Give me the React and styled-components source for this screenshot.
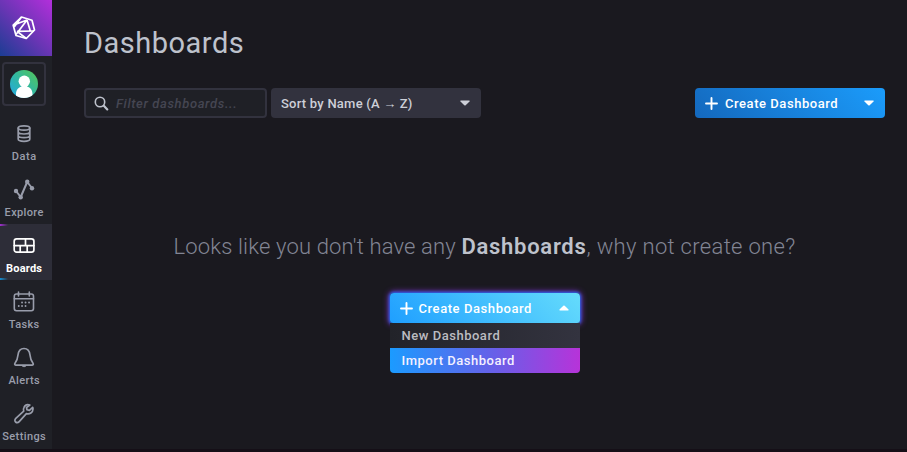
import React from "react";
import styled, { createGlobalStyle, css } from "styled-components";

const GlobalStyle = createGlobalStyle`
  * { box-sizing: border-box; }
  html, body { margin: 0; padding: 0; background: #1a191f; overflow: hidden; }
  body { font-family: Roboto, "Liberation Sans", sans-serif; }
  svg { display: block; flex: none; }
`;

const Page = styled.div`
  display: flex;
  width: 907px;
  height: 452px;
  background: #1a191f;
  border-bottom: 3px solid #150f17;
`;

const Sidebar = styled.nav`
  width: 52px;
  flex: none;
  display: flex;
  flex-direction: column;
  background: #1f2026;
  overflow: hidden;
`;

const Logo = styled.div`
  height: 56px;
  flex: none;
  padding: 16px 0 0 12px;
  background: linear-gradient(45deg, #1b3d93 0%, #6b35b5 50%, #b32fdb 100%);
`;

const UserSlot = styled.div`
  height: 56px;
  flex: none;
  padding: 6px 0 0 2px;
`;

const UserFrame = styled.div`
  width: 44px;
  height: 44px;
  display: flex;
  align-items: center;
  justify-content: center;
  border: 2px solid #32323e;
  border-radius: 4px;
`;

const NavItem = styled.a`
  height: 56px;
  flex: none;
  display: flex;
  flex-direction: column;
  width: 52px;
  padding: 10px 4px 0 0;
  align-items: center;
  color: ${(p) => (p.$active ? "#ffffff" : "#999dab")};
  ${(p) =>
    p.$active &&
    css`
      background:
        linear-gradient(90deg, #a02fd0, transparent) 0 0 / 8px 2px no-repeat,
        linear-gradient(90deg, #168fd5, transparent) 0 100% / 8px 2px no-repeat,
        #2d2d38;
    `}
`;

const NavLabel = styled.span`
  margin-top: 3px;
  font-size: 11px;
  line-height: 16px;
  font-weight: ${(p) => (p.$active ? 700 : 500)};
  letter-spacing: ${(p) => p.$track}px;
  margin-right: -${(p) => p.$track}px;
  white-space: nowrap;
`;

const Main = styled.main`
  flex: 1;
  display: flex;
  flex-direction: column;
  padding: 24px 22px 0 32px;
`;

const Title = styled.h1`
  margin: 0;
  height: 38px;
  font-size: 29px;
  line-height: 38px;
  font-weight: 400;
  letter-spacing: 0.5px;
  color: #bec2cc;
`;

const Toolbar = styled.div`
  display: flex;
  gap: 4px;
  margin-top: 26px;
`;

const SearchBox = styled.div`
  width: 183px;
  height: 30px;
  display: flex;
  align-items: center;
  gap: 7px;
  padding-left: 8px;
  border: 2px solid #32323e;
  border-radius: 4px;
  background: #1f2026;
`;

const Placeholder = styled.span`
  font-size: 13px;
  font-style: italic;
  font-weight: 500;
  letter-spacing: 0.62px;
  color: #454652;
`;

const SortButton = styled.button`
  width: 210px;
  height: 30px;
  display: flex;
  align-items: center;
  justify-content: space-between;
  border: 0;
  border-radius: 4px;
  padding: 0 11px 0 10px;
  background: #32323e;
  color: #cdcfd8;
  font: 500 13px/30px Roboto, sans-serif;
  letter-spacing: 0.23px;
`;

const SortLabel = styled.span`
  height: 30px;
  line-height: 32px;
`;

const Arrow = styled.span`
  font: 400 13px/1 "Liberation Sans", sans-serif;
  letter-spacing: 0;
`;

const CreateButton = styled.button`
  width: 190px;
  height: 30px;
  display: flex;
  align-items: center;
  border: 0;
  border-radius: ${(p) => (p.$open ? "4px 4px 3px 3px" : "4px")};
  padding: 0 11px 0 10px;
  margin-left: ${(p) => (p.$open ? "0" : "auto")};
  color: #fff;
  font: 500 13px/30px Roboto, sans-serif;
  letter-spacing: ${(p) => (p.$open ? 0.57 : 0.55)}px;
  background: ${(p) =>
    p.$open
      ? "linear-gradient(45deg, #1f9fff 0%, #65dcfc 100%)"
      : "linear-gradient(45deg, #1468bd 0%, #1b9cfb 100%)"};
  box-shadow: ${(p) => (p.$open ? "0 0 3px 1px #2465ef, 0 0 6px 1px #8b36d6" : "none")};
`;

const CreateLabel = styled.span`
  flex: 1;
  text-align: left;
  margin-left: ${(p) => (p.$open ? 6 : 7)}px;
  height: 30px;
  line-height: 32px;
`;

const EmptyState = styled.section`
  display: flex;
  flex-direction: column;
  align-items: center;
  margin-top: 113px;
`;

const Message = styled.p`
  margin: 0;
  height: 32px;
  width: 622px;
  font-size: 22px;
  line-height: 32px;
  font-weight: 300;
  letter-spacing: 0.16px;
  white-space: nowrap;
  color: #828594;

  b {
    font-weight: 600;
    letter-spacing: 0.72px;
    color: #bec2cc;
  }
`;

const MessageTail = styled.span`
  letter-spacing: 0.32px;
`;

const Dropdown = styled.div`
  width: 190px;
  margin-top: 30px;
`;

const Menu = styled.div`
  border-radius: 0 0 4px 4px;
  overflow: hidden;
  background: linear-gradient(90deg, #222329, #33333f);
`;

const MenuItem = styled.div`
  height: 25px;
  padding-left: 12px;
  font-size: 13px;
  line-height: 25px;
  font-weight: 500;
  letter-spacing: 0.52px;
  color: ${(p) => (p.$hover ? "#f4f0ff" : "#bcbcc1")};
  background: ${(p) =>
    p.$hover ? "linear-gradient(90deg, #1b9bff 0%, #685fe8 55%, #b733d9 100%)" : "transparent"};
`;

const Stroke = ({ children, width = 2 }) => (
  <svg width="24" height="24" viewBox="0 0 24 24" fill="none" stroke="currentColor"
    strokeWidth={width} strokeLinecap="round" strokeLinejoin="round">
    {children}
  </svg>
);

const DataIcon = () => (
  <Stroke width={1.7}>
    <ellipse cx="12" cy="6" rx="5.8" ry="2.2" />
    <path d="M6.2 6v11c0 1.300 2.600 2.300 5.800 2.300s5.800-1 5.800-2.300V6M6.200 9.800c0 1.300 2.600 2.200 5.800 2.200s5.800-.9 5.800-2.200M6.200 13.500c0 1.300 2.600 2.200 5.800 2.200s5.800-.9 5.800-2.200" />
  </Stroke>
);

const ExploreIcon = () => (
  <Stroke width={2}>
    <path d="M4 13l4.700 6L15.200 4 20 10" />
    <g fill="currentColor" stroke="none">
      <circle cx="4" cy="13" r="2.200" />
      <circle cx="8.700" cy="19.300" r="2.200" />
      <circle cx="15.200" cy="3.800" r="2.200" />
      <circle cx="20" cy="10.200" r="2.200" />
    </g>
  </Stroke>
);

const BoardsIcon = () => (
  <Stroke width={1.7}>
    <rect x="2.200" y="4.800" width="19.700" height="13.400" rx="2.400" />
    <path d="M2.200 11.600h19.700M13.500 4.800v6.800M8.200 11.600v6.600M15.200 11.600v6.600" />
  </Stroke>
);

const TasksIcon = () => (
  <Stroke width={1.6}>
    <rect x="2.300" y="4" width="19.200" height="16.700" rx="2.200" />
    <path d="M2.300 8.800h19.200M6.500 2v4M17.300 2v4" />
    <path d="M10 12.500h.1M13.500 12.500h.1M17 12.500h.1M6.700 16h.1M10 16h.1M13.500 16h.1" strokeWidth="1.800" />
  </Stroke>
);

const AlertsIcon = () => (
  <Stroke width={1.7}>
    <path d="M12 2.500c-4 0-5.600 2.900-6 6.500-.4 4.200-1.200 6-3 8.200-.8 1 0 1.900 1 1.900h16c1 0 1.800-.9 1-1.900-1.800-2.200-2.600-4-3-8.200-.4-3.600-2-6.500-6-6.500z" />
    <path d="M9.800 19.500h4.400c-.3 1.700-4.100 1.700-4.400 0z" fill="currentColor" strokeWidth="0.8" />
  </Stroke>
);

const SettingsIcon = () => (
  <Stroke width={1.7}>
    <path d="M17.800 3.100c-2.300-.8-4.800.2-5.800 2.200-.7 1.300-.7 2.600-.3 3.900L3.800 16.300c-1.200 1.200-1.200 2.800-.2 3.700 1 .9 2.500.8 3.600-.4l7.200-8c3.300 1 6.500-1.100 6.600-4.700 0-.5-.1-1-.3-1.500l-3.300 3-2.400-.6-.5-2.300z" />
  </Stroke>
);

const LogoMark = () => (
  <svg width="24" height="24" viewBox="0 0 24 24" fill="none" stroke="#fff" strokeWidth="1.700" strokeLinejoin="round">
    <path d="M9.500 1L20 4.300l2.500 9.700-8.200 8.500L4 19.500 1.200 9.200z" />
    <path d="M1.200 9.200L15 4M9.500 1L2.200 11M15 4L4 18.500M15 4l3.500 11.500M5 15.300l17-.3M5 15.300l9.300 7.200" />
  </svg>
);

const Avatar = () => (
  <svg width="28" height="28" viewBox="0 0 28 28">
    <defs>
      <linearGradient id="avatarFill" x1="0" y1="1" x2="1" y2="0">
        <stop offset="0" stopColor="#22a7e5" />
        <stop offset="0.500" stopColor="#32b8a1" />
        <stop offset="1" stopColor="#57c653" />
      </linearGradient>
      <clipPath id="avatarClip"><circle cx="14" cy="14" r="14" /></clipPath>
    </defs>
    <circle cx="14" cy="14" r="14" fill="url(#avatarFill)" />
    <g fill="#fff" clipPath="url(#avatarClip)">
      <circle cx="14.300" cy="11.300" r="5.700" />
      <path d="M11.500 15h5.600v1.500c3.200.8 5.300 3.500 5.400 7.500V28H6v-4c.1-4 2.300-6.700 5.500-7.500z" />
    </g>
  </svg>
);

const Caret = ({ up }) => (
  <svg width="10" height="6" viewBox="0 0 10 6">
    <path d={up ? "M.8 5.500h8.400q.8-.3.3-.9L5.700.7Q5 .1 4.300.7L.5 4.600q-.5.6.3.900z" : "M.8.5h8.400q.8.3.3.900L5.700 5.300Q5 5.900 4.300 5.300L.5 1.400Q0 .8.8.5z"} fill="currentColor" />
  </svg>
);

const Plus = () => (
  <svg width="13" height="13" viewBox="0 0 13 13" fill="none" stroke="currentColor" strokeWidth="1.900" strokeLinecap="round">
    <path d="M6.500 1v11M1 6.500h11" />
  </svg>
);

const SearchIcon = () => (
  <svg width="15" height="15" viewBox="0 0 15 15" fill="none" stroke="#bec2cc" strokeLinecap="round">
    <circle cx="6" cy="6" r="4.700" strokeWidth="1.600" />
    <path d="M9.800 9.800l3.500 3.600" strokeWidth="2.200" />
  </svg>
);

const NAV = [
  { label: "Data", Icon: DataIcon, track: 0.6 },
  { label: "Explore", Icon: ExploreIcon, track: 0.35 },
  { label: "Boards", Icon: BoardsIcon, active: true, track: 0.2 },
  { label: "Tasks", Icon: TasksIcon, track: 0.35 },
  { label: "Alerts", Icon: AlertsIcon, track: 0.35 },
  { label: "Settings", Icon: SettingsIcon, track: 0.4 },
];

const CreateDashboard = ({ open }) => (
  <CreateButton $open={open}>
    <Plus />
    <CreateLabel $open={open}>Create Dashboard</CreateLabel>
    <Caret up={open} />
  </CreateButton>
);

export default function App() {
  return (
    <>
      <GlobalStyle />
      <Page>
        <Sidebar>
          <Logo><LogoMark /></Logo>
          <UserSlot><UserFrame><Avatar /></UserFrame></UserSlot>
          {NAV.map(({ label, Icon, active, track }) => (
            <NavItem key={label} $active={active}>
              <Icon />
              <NavLabel $active={active} $track={track}>{label}</NavLabel>
            </NavItem>
          ))}
        </Sidebar>
        <Main>
          <Title>Dashboards</Title>
          <Toolbar>
            <SearchBox>
              <SearchIcon />
              <Placeholder>Filter dashboards...</Placeholder>
            </SearchBox>
            <SortButton>
              <SortLabel>Sort by Name (A <Arrow>→</Arrow> Z)</SortLabel>
              <Caret />
            </SortButton>
            <CreateDashboard />
          </Toolbar>
          <EmptyState>
            <Message>
              Looks like you don't have any <b>Dashboards</b>
              <MessageTail>, why not create one?</MessageTail>
            </Message>
            <Dropdown>
              <CreateDashboard open />
              <Menu>
                <MenuItem>New Dashboard</MenuItem>
                <MenuItem $hover>Import Dashboard</MenuItem>
              </Menu>
            </Dropdown>
          </EmptyState>
        </Main>
      </Page>
    </>
  );
}
